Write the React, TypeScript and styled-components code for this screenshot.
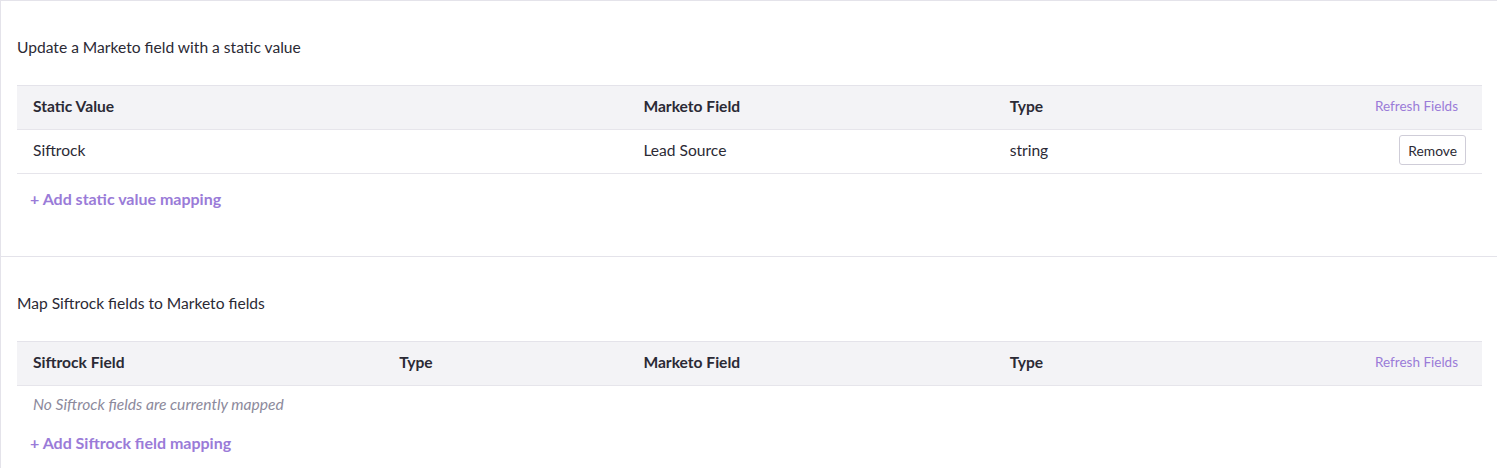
import styled, { createGlobalStyle } from "styled-components";

const GlobalStyle = createGlobalStyle`
  body {
    margin: 0;
    background: #ffffff;
    font-family: Lato, "Liberation Sans", sans-serif;
    color: #2b2a35;
  }
`;

const Page = styled.div`
  border-left: 1px solid #e4e3ea;
  border-top: 1px solid #e4e3ea;
`;

const Section = styled.section`
  padding: 35px 15px 46px 16px;
  border-bottom: 1px solid #e4e3ea;
`;

const Title = styled.h2`
  margin: 0 0 27px;
  font-size: 15.6px;
  line-height: 22px;
  font-weight: 400;
  color: #2b2a35;
`;

const Table = styled.div``;

const Row = styled.div<{ $cols: string; $head?: boolean }>`
  display: grid;
  grid-template-columns: ${(p) => p.$cols};
  align-items: center;
  height: ${(p) => (p.$head ? 45 : 44)}px;
  padding-bottom: 3px;
  box-sizing: border-box;
  border-bottom: 1px solid #e6e5eb;
  background: ${(p) => (p.$head ? "#f3f3f6" : "#ffffff")};
  border-top: ${(p) => (p.$head ? "1px solid #e4e3ea" : "none")};
  font-size: 15.6px;
  font-weight: ${(p) => (p.$head ? 700 : 400)};
`;

const Cell = styled.div<{ $right?: boolean }>`
  padding: 0 16px;
  display: flex;
  justify-content: ${(p) => (p.$right ? "flex-end" : "flex-start")};
  white-space: nowrap;
`;

const RefreshLink = styled.a`
  font-size: 13.5px;
  font-weight: 400;
  color: #9a7bd8;
  padding-right: 8px;
  cursor: pointer;
`;

const RemoveButton = styled.button`
  height: 30px;
  padding: 0 8px;
  border: 1px solid #cfcdd8;
  border-radius: 3px;
  background: #fff;
  font-family: inherit;
  font-size: 13.8px;
  color: #2b2a35;
`;

const EmptyRow = styled.div`
  height: 38px;
  display: flex;
  align-items: center;
  padding: 0 16px 2px;
  box-sizing: border-box;
  font-size: 15.6px;
  font-style: italic;
  color: #8c8a9c;
`;

const AddLink = styled.a<{ $gap: number }>`
  display: block;
  margin-top: ${(p) => p.$gap}px;
  padding-left: 13px;
  font-size: 16px;
  line-height: 22px;
  font-weight: 700;
  color: #9a7bd8;
  cursor: pointer;
`;

const staticCols = "5fr 3fr 2fr 2fr";
const mapCols = "3fr 2fr 3fr 2fr 2fr";

export default function App() {
  return (
    <>
      <GlobalStyle />
      <Page>
        <Section>
          <Title>Update a Marketo field with a static value</Title>
          <Table>
            <Row $cols={staticCols} $head>
              <Cell>Static Value</Cell>
              <Cell>Marketo Field</Cell>
              <Cell>Type</Cell>
              <Cell $right>
                <RefreshLink>Refresh Fields</RefreshLink>
              </Cell>
            </Row>
            <Row $cols={staticCols}>
              <Cell>Siftrock</Cell>
              <Cell>Lead Source</Cell>
              <Cell>string</Cell>
              <Cell $right>
                <RemoveButton>Remove</RemoveButton>
              </Cell>
            </Row>
          </Table>
          <AddLink $gap={14}>+ Add static value mapping</AddLink>
        </Section>
        <Section>
          <Title>Map Siftrock fields to Marketo fields</Title>
          <Table>
            <Row $cols={mapCols} $head>
              <Cell>Siftrock Field</Cell>
              <Cell>Type</Cell>
              <Cell>Marketo Field</Cell>
              <Cell>Type</Cell>
              <Cell $right>
                <RefreshLink>Refresh Fields</RefreshLink>
              </Cell>
            </Row>
            <EmptyRow>No Siftrock fields are currently mapped</EmptyRow>
          </Table>
          <AddLink $gap={8}>+ Add Siftrock field mapping</AddLink>
        </Section>
      </Page>
    </>
  );
}
